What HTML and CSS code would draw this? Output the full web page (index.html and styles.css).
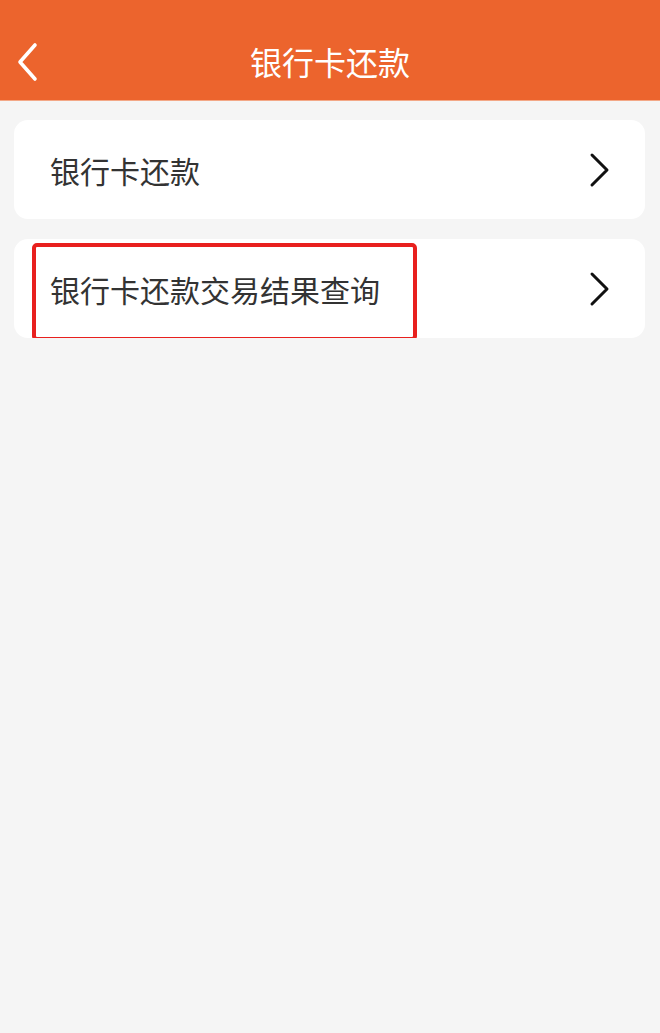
FILE: index.html
```html
<!DOCTYPE html>
<html lang="zh-CN">
<head>
  <meta charset="UTF-8" />
  <meta name="viewport" content="width=device-width, initial-scale=1" />
  <title>银行卡还款</title>
  <link rel="stylesheet" href="styles.css">
</head>
<body>
  <header class="nav-bar">
    <button class="back-btn" aria-label="返回">
      <svg width="24" height="40" viewBox="0 0 24 40">
        <path d="M19 3 L4 20 L19 37" fill="none" stroke="#fff" stroke-width="3.6" stroke-linecap="round" stroke-linejoin="round"/>
      </svg>
    </button>
    <h1 class="nav-title">银行卡还款</h1>
  </header>

  <main class="menu-list">
    <a class="menu-item" href="#">
      <span class="menu-text">银行卡还款</span>
      <svg class="arrow" width="24" height="36" viewBox="0 0 24 36">
        <path d="M4 3 L19 18 L4 33" fill="none" stroke="#111" stroke-width="3" stroke-linecap="round" stroke-linejoin="round"/>
      </svg>
    </a>
    <a class="menu-item" href="#">
      <span class="menu-text">银行卡还款交易结果查询</span>
      <svg class="arrow" width="24" height="36" viewBox="0 0 24 36">
        <path d="M4 3 L19 18 L4 33" fill="none" stroke="#111" stroke-width="3" stroke-linecap="round" stroke-linejoin="round"/>
      </svg>
      <span class="highlight"></span>
    </a>
  </main>
</body>
</html>
```

FILE: styles.css
```css
body {
  margin: 0;
  background: #f5f5f5;
  font-family: "Noto Sans CJK SC", "Noto Sans", sans-serif;
}

.nav-bar {
  height: 101px;
  background: #ec642d;
  display: flex;
  align-items: center;
  justify-content: center;
  position: relative;
  border-bottom: 1px solid #f3a887;
  box-sizing: border-box;
}
.back-btn {
  position: absolute;
  left: 16px;
  top: 42px;
  background: none;
  border: none;
  padding: 0;
  cursor: pointer;
  display: flex;
}
.nav-title {
  margin: 22px 0 0;
  color: #fff;
  font-size: 32px;
  font-weight: normal;
  line-height: 1;
}

.menu-list {
  padding: 19px 15px 0 14px;
  display: flex;
  flex-direction: column;
  gap: 20px;
}
.menu-item {
  position: relative;
  height: 99px;
  background: #fff;
  border-radius: 14px;
  display: flex;
  align-items: center;
  justify-content: space-between;
  padding: 0 33px 0 36px;
  text-decoration: none;
  color: #333;
}
.menu-text {
  font-size: 30px;
  line-height: 1;
}
.arrow {
  display: block;
}

.highlight {
  position: absolute;
  left: 18px;
  top: 4px;
  width: 385px;
  height: 98px;
  box-sizing: border-box;
  border: 4px solid #e8201e;
  border-radius: 5px;
}
```
